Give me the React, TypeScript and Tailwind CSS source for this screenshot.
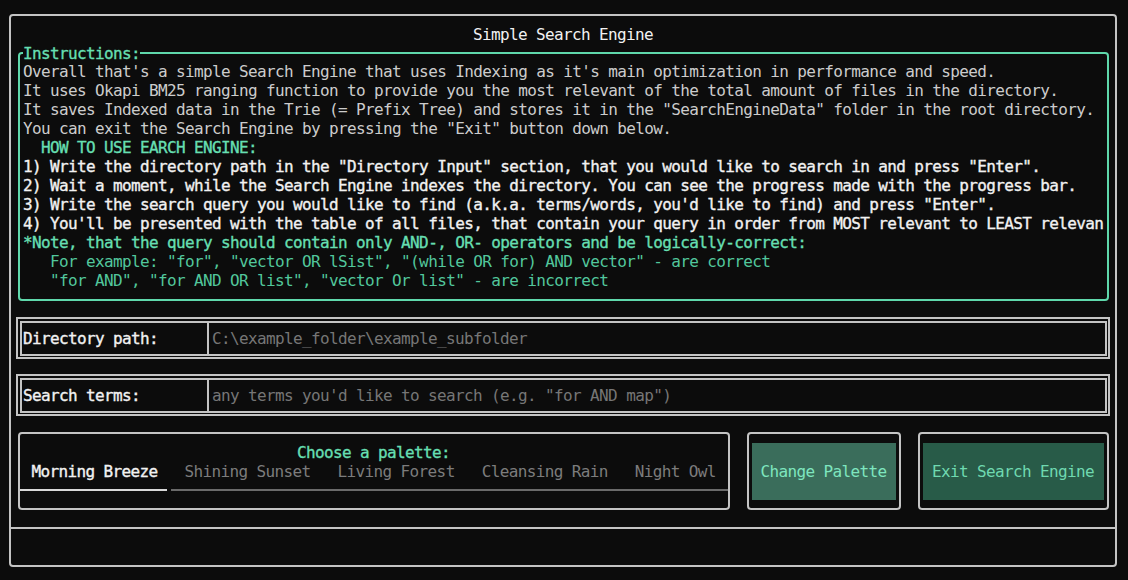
import type { ReactNode } from 'react';

const instructions: { text: string; tone: 'plain' | 'bold' | 'accent' | 'accentSoft' }[] = [
  { text: "Overall that's a simple Search Engine that uses Indexing as it's main optimization in performance and speed.", tone: 'plain' },
  { text: 'It uses Okapi BM25 ranging function to provide you the most relevant of the total amount of files in the directory.', tone: 'plain' },
  { text: 'It saves Indexed data in the Trie (= Prefix Tree) and stores it in the "SearchEngineData" folder in the root directory.', tone: 'plain' },
  { text: 'You can exit the Search Engine by pressing the "Exit" button down below.', tone: 'plain' },
  { text: '  HOW TO USE EARCH ENGINE:', tone: 'accent' },
  { text: '1) Write the directory path in the "Directory Input" section, that you would like to search in and press "Enter".', tone: 'bold' },
  { text: '2) Wait a moment, while the Search Engine indexes the directory. You can see the progress made with the progress bar.', tone: 'bold' },
  { text: '3) Write the search query you would like to find (a.k.a. terms/words, you\'d like to find) and press "Enter".', tone: 'bold' },
  { text: "4) You'll be presented with the table of all files, that contain your query in order from MOST relevant to LEAST relevant.", tone: 'bold' },
  { text: '*Note, that the query should contain only AND-, OR- operators and be logically-correct:', tone: 'accent' },
  { text: '   For example: "for", "vector OR lSist", "(while OR for) AND vector" - are correct', tone: 'accentSoft' },
  { text: '   "for AND", "for AND OR list", "vector Or list" - are incorrect', tone: 'accentSoft' },
];

// semi-bold look: DejaVu Bold is much heavier than the terminal font's bold
const strong = '[-webkit-text-stroke:0.35px_currentColor]';

const toneClass = {
  plain: 'text-[#cccccc]',
  bold: `text-[#f2f2f2] ${strong}`,
  accent: `text-[#66dfb1] ${strong}`,
  accentSoft: 'text-[#52c79c]',
};

const palettes = ['Morning Breeze', 'Shining Sunset', 'Living Forest', 'Cleansing Rain', 'Night Owl'];

function Field({ label, placeholder }: { label: string; placeholder: string }) {
  return (
    <div className="-mx-[1.5px] border-2 border-[#c4c4c4] p-[1.5px]">
      <div className="flex h-[35px] items-center border-2 border-[#c4c4c4]">
        <div className={`w-[185px] pl-[1.5px] text-[#f2f2f2] ${strong}`}>{label}</div>
        <div className="h-full border-l-2 border-[#c4c4c4]" />
        <div className="pl-[3.5px] text-[#767676]">{placeholder}</div>
      </div>
    </div>
  );
}

function Button({ children, fill }: { children: ReactNode; fill: string }) {
  return (
    <div className="h-full rounded-[4px] border-2 border-[#c4c4c4] px-[3px] py-[8.5px]">
      <div className={`flex h-full items-center justify-center ${fill}`}>{children}</div>
    </div>
  );
}

export default function App() {
  return (
    <div
      className="h-[580px] w-[1128px] overflow-hidden bg-[#0c0c0c] pl-[9px] pt-[14px] text-[16px] leading-[19px] tracking-[-0.63px] text-[#cccccc]"
      style={{ fontFamily: '"DejaVu Sans Mono", "Liberation Mono", monospace' }}
    >
      <div className="flex h-[553px] w-[1108px] flex-col rounded-[4px] border-2 border-[#c4c4c4]">
        <div className="flex flex-col px-[6.5px] pb-[17px]">
          <div className="mt-[8.5px] text-center text-[#f2f2f2]">Simple Search Engine</div>

          {/* instructions */}
          <div className="relative mt-[8.5px] rounded-[4px] border-2 border-[#5fd8ab] pb-[9px] pl-[3.5px] pt-[8px]">
            <span className={`absolute -top-[10.5px] left-[3.5px] bg-[#0c0c0c] text-[#66dfb1] ${strong}`}>Instructions:</span>
            {instructions.map((line, i) => (
              <div key={i} className={`overflow-hidden whitespace-pre pr-[2px] ${toneClass[line.tone]}`}>
                {line.text.slice(0, 120)}
              </div>
            ))}
          </div>

          <div className="mt-[16px]">
            <Field label="Directory path:" placeholder="C:\example_folder\example_subfolder" />
          </div>
          <div className="mt-[15px]">
            <Field label="Search terms:" placeholder={'any terms you\'d like to search (e.g. "for AND map")'} />
          </div>

          {/* palette + buttons */}
          <div className="mt-[16px] flex h-[78px] gap-[17px]">
            <div className="flex w-[712px] flex-col rounded-[4px] border-2 border-[#c4c4c4] pt-[8.5px]">
              <div className={`text-center text-[#66dfb1] ${strong}`}>Choose a palette:</div>
              <div className="flex gap-[27px] whitespace-pre px-[12px]">
                {palettes.map((p, i) => (
                  <span key={p} className={i === 0 ? `text-[#f2f2f2] ${strong}` : 'text-[#7c7c7c]'}>
                    {p}
                  </span>
                ))}
              </div>
              <div className="mt-[8.5px] flex gap-[4px]">
                <div className="h-[2px] w-[147px] bg-[#d8d8d8]" />
                <div className="h-[2px] flex-1 bg-[#6a6a6a]" />
              </div>
            </div>
            <div className="w-[154px]">
              <Button fill="bg-[#3a6d5b] text-[#7ee6bf]">Change Palette</Button>
            </div>
            <div className="flex-1">
              <Button fill="bg-[#285b48] text-[#6fd9b0]">Exit Search Engine</Button>
            </div>
          </div>
        </div>
        <div className="border-t-2 border-[#c4c4c4]" />
        <div className="h-[36px]" />
      </div>
    </div>
  );
}
